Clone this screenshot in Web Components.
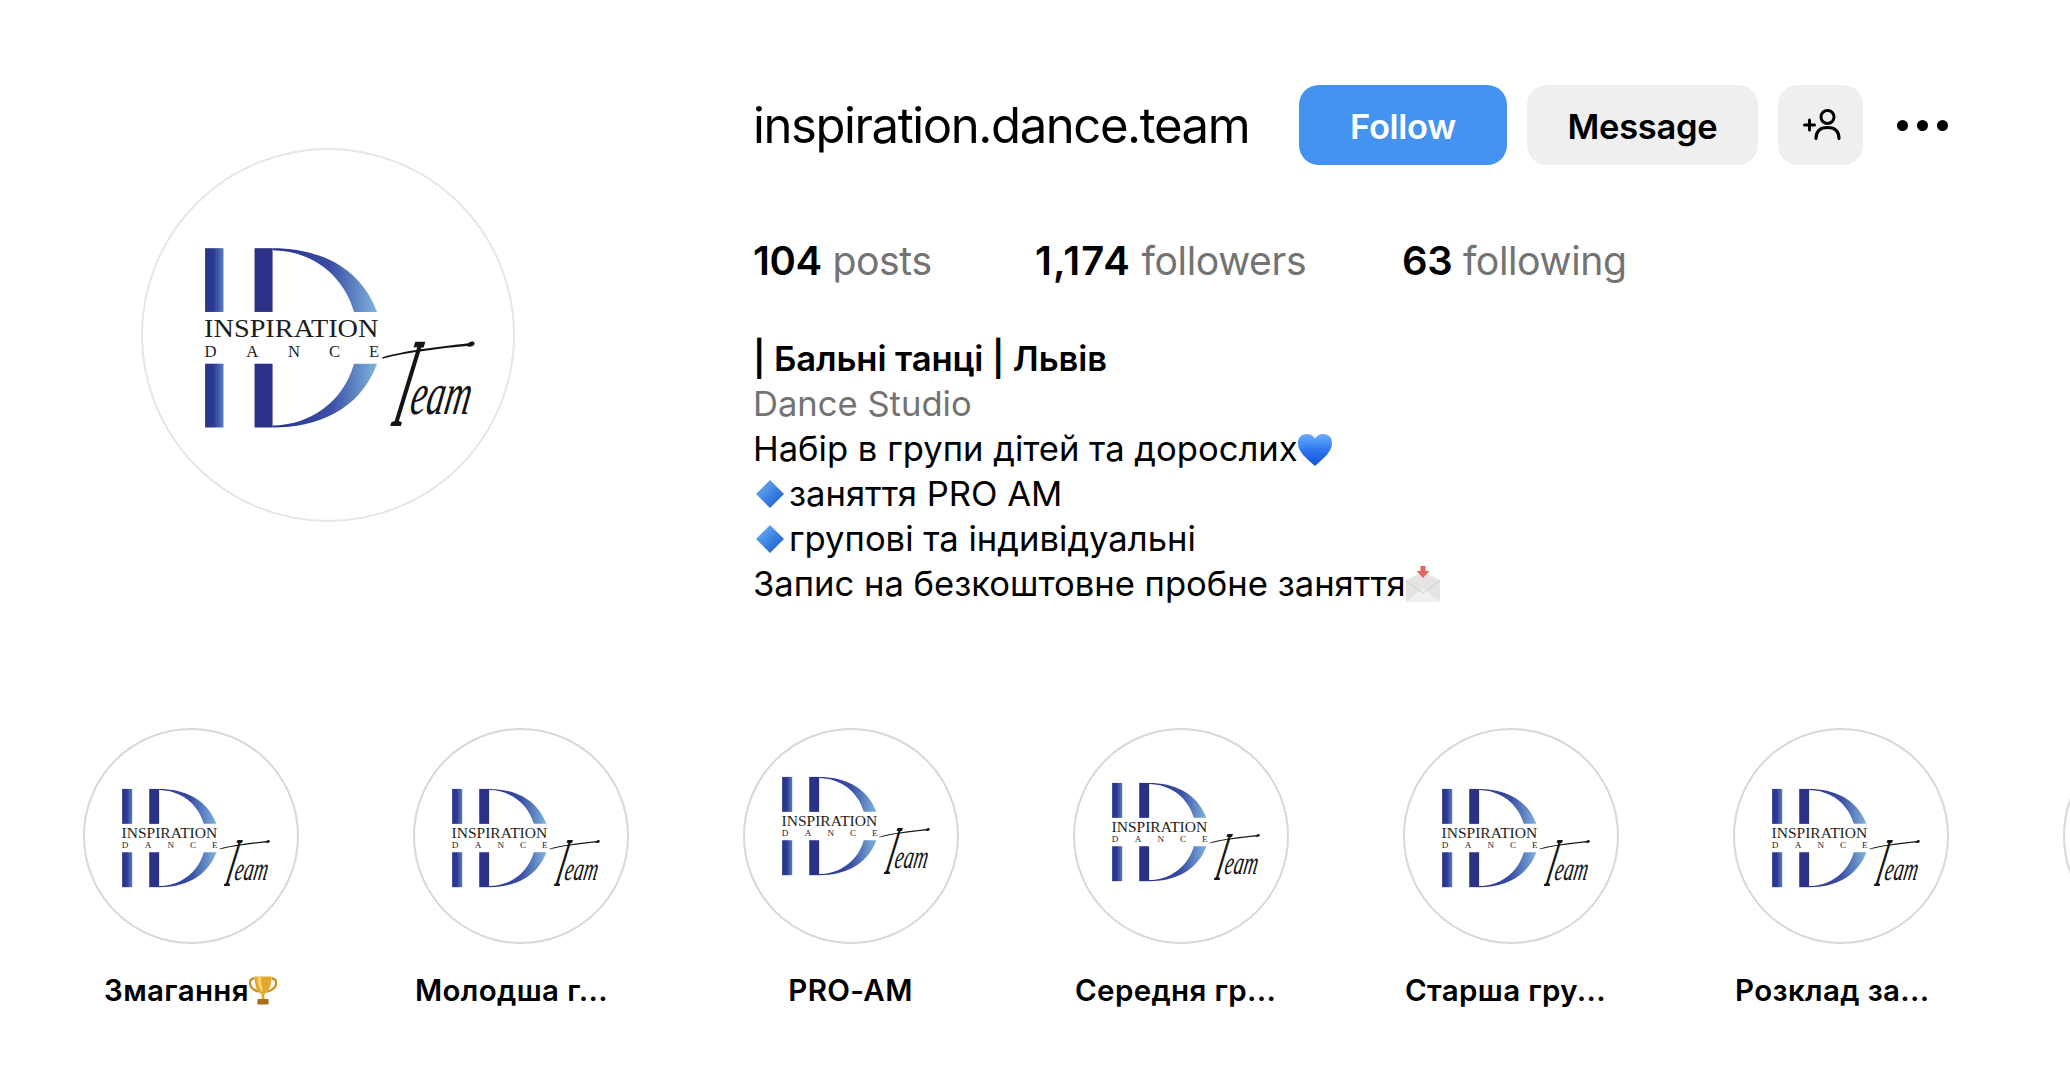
<!DOCTYPE html>
<html lang="uk">
<head>
<meta charset="utf-8">
<title>inspiration.dance.team</title>
<style>
  html, body { margin: 0; padding: 0; background: #fff; overflow: hidden; }
  body { font-family: Inter, "Noto Sans", sans-serif; color: #000; }
</style>
</head>
<body>
<ig-profile></ig-profile>
<script>
// Logo - coordinates follow the avatar crop, circle is 1120 wide
class IdLogo extends HTMLElement {
  connectedCallback() {
    const shadow = this.attachShadow({ mode: 'open' });
    const uid = 'g' + Math.random().toString(36).slice(2, 8);
    shadow.innerHTML = `
      <style>
        :host { display: block; width: 100%; height: 100%; }
        svg { display: block; width: 100%; height: 100%; overflow: visible; }
        .word { font-family: "Liberation Serif", serif; font-size: 76px; fill: #1d1d20; }
        .dance { font-family: "Liberation Serif", serif; font-size: 50px; fill: #232326; }
        .script { font-family: "Liberation Serif", serif; fill: #141414; }
      </style>
      <svg viewBox="65 55 1120 1120" aria-label="ID Inspiration Dance Team">
        <defs>
          <linearGradient id="${uid}i" x1="0" x2="1" y1="0" y2="0">
            <stop offset="0" stop-color="#2a3289"/><stop offset=".45" stop-color="#2b3a91"/><stop offset="1" stop-color="#5a7dc2"/>
          </linearGradient>
          <linearGradient id="${uid}d" gradientUnits="userSpaceOnUse" x1="459" x2="772" y1="0" y2="0">
            <stop offset="0" stop-color="#28308a"/><stop offset=".55" stop-color="#3a4ea4"/><stop offset="1" stop-color="#80b4dd"/>
          </linearGradient>
          <!-- keeps only the stem of the T, the flourish below is its bar -->
          <clipPath id="${uid}t"><path d="M888 630H918L842 892H810Z"/></clipPath>
        </defs>
        <rect x="257" y="355" width="55" height="191" fill="url(#${uid}i)"/>
        <rect x="257" y="701" width="55" height="191" fill="url(#${uid}i)"/>
        <rect x="405" y="355" width="54" height="191" fill="#2a3187"/>
        <rect x="405" y="701" width="54" height="191" fill="#2a3187"/>
        <path d="M459 355C590 355 720 405 772 546H703C670 430 570 362 459 361Z" fill="url(#${uid}d)"/>
        <path d="M459 892C590 892 720 842 772 701H703C670 817 570 885 459 886Z" fill="url(#${uid}d)"/>
        <text class="word" x="254" y="622" textLength="522" lengthAdjust="spacingAndGlyphs">INSPIRATION</text>
        <text class="dance" x="255 380 505 628 748" y="680">DANCE</text>
        <path d="M785 683C850 662 960 650 1045 640C1052 634 1062 632 1064 640C1064 650 1050 652 1040 648C960 655 860 668 790 685Z" fill="#141414"/>
        <g clip-path="url(#${uid}t)">
          <g transform="translate(785 888) skewX(-17) scale(.35 1)">
            <text class="script" x="0" y="0" font-size="385">T</text>
          </g>
        </g>
        <g transform="translate(866 852) skewX(-10) scale(.6 1)">
          <text class="script" x="0" y="0" font-size="180" font-style="italic">eam</text>
        </g>
      </svg>
    `;
  }
}

// Small colour emoji, no emoji font on the box
class IgEmoji extends HTMLElement {
  connectedCallback() {
    const shadow = this.attachShadow({ mode: 'open' });
    const art = {
      heart: `<svg viewBox="0 0 34 34"><defs><linearGradient id="h" x1="0" x2="0" y1="0" y2="1"><stop offset="0" stop-color="#6aaefb"/><stop offset=".5" stop-color="#2f78ef"/><stop offset="1" stop-color="#1050da"/></linearGradient></defs><path d="M17 33C8 25 0 19 0 10 0 4 4 1 9 1c3.500 0 6.500 1.800 8 4.800C18.500 2.800 21.500 1 25 1c5 0 9 3 9 9 0 9-8 15-17 23Z" fill="url(#h)"/></svg>`,
      diamond: `<svg viewBox="0 0 28 28"><defs><linearGradient id="d" x1="0" x2="1" y1="0" y2="1"><stop offset="0" stop-color="#7db4f1"/><stop offset=".5" stop-color="#3f86e4"/><stop offset="1" stop-color="#1a4fbc"/></linearGradient></defs><path d="M14 0 28 14 14 28 0 14Z" fill="url(#d)"/></svg>`,
      mail: `<svg viewBox="0 0 34 36"><path d="M0 14 17 6 34 14V36H0Z" fill="#e6e4e2"/><path d="M0 36 17 22 34 36Z" fill="#f1f0ee"/><path d="M0 15 17 27 34 15" fill="none" stroke="#d2d0cd" stroke-width="1"/><path d="M14.500 0h5v5h4l-6.500 7-6.500-7h4Z" fill="#e4665e"/></svg>`,
      trophy: `<svg viewBox="0 0 30 32"><path d="M6 3C0 3 0 10 3 13s6 4 8 4" fill="none" stroke="#c98f1f" stroke-width="2.500"/><path d="M24 3c6 0 6 7 3 10s-6 4-8 4" fill="none" stroke="#c98f1f" stroke-width="2.500"/><path d="M6 1H24C24 12 21 18 16.500 20V25H13.500V20C9 18 6 12 6 1Z" fill="#e3a92f"/><path d="M9 1h4c0 8 1 13 2 17-4-3-6-9-6-17Z" fill="#f6d36b"/><rect x="9" y="25" width="12" height="6" rx="1" fill="#a9701c"/></svg>`
    };
    shadow.innerHTML = `
      <style>
        :host { display: inline-block; width: var(--w, 34px); height: var(--h, 34px); vertical-align: var(--va, -6px); margin: var(--m, 0); }
        svg { display: block; width: 100%; height: 100%; }
      </style>
      ${art[this.getAttribute('name')] || ''}
    `;
  }
}

class IgButton extends HTMLElement {
  connectedCallback() {
    const shadow = this.attachShadow({ mode: 'open' });
    shadow.innerHTML = `
      <style>
        :host {
          display: flex; align-items: center; justify-content: center;
          height: 80px; border-radius: 20px; box-sizing: border-box; padding-top: 2px;
          background: var(--bg, #efefef); color: var(--fg, #000);
          font-weight: 600; font-size: 34.500px; letter-spacing: -0.3px;
        }
      </style>
      <slot></slot>
    `;
  }
}

class IgStat extends HTMLElement {
  connectedCallback() {
    const shadow = this.attachShadow({ mode: 'open' });
    shadow.innerHTML = `
      <style>
        :host { display: block; font-size: 39.200px; line-height: 50px; color: #737373; white-space: nowrap; letter-spacing: -0.4px; }
        b { color: #000; font-weight: 600; font-size: 40px; letter-spacing: var(--num, -0.4px); }
      </style>
      <b>${this.getAttribute('value')}</b> <slot></slot>
    `;
  }
}

class IgHighlight extends HTMLElement {
  connectedCallback() {
    const shadow = this.attachShadow({ mode: 'open' });
    const label = this.getAttribute('label') || '';
    const shift = this.getAttribute('shift') || '0';
    const cut = this.hasAttribute('cut');
    shadow.innerHTML = `
      <style>
        :host { display: flex; flex-direction: column; flex: none; width: 215px; align-items: center; }
        .ring {
          width: 216px; height: 216px; box-sizing: border-box; flex: none;
          border: 2.500px solid #d8d8d8; border-radius: 50%; background: #fff;
          display: flex; align-items: center; justify-content: center; overflow: hidden;
        }
        .art { width: 205px; height: 205px; flex: none; transform: translate(-1px, ${shift}px); }
        .label {
          margin-top: 26px; height: 40px; line-height: 40px; align-self: ${cut ? 'flex-start' : 'center'};
          ${cut ? 'margin-left: 2px;' : ''}
          font-size: 29.500px; font-weight: 600; white-space: nowrap; letter-spacing: 0.35px;
        }
      </style>
      <div class="ring">${label ? '<div class="art"><id-logo></id-logo></div>' : ''}</div>
      ${label ? `<div class="label">${label}<slot></slot></div>` : ''}
    `;
  }
}

class IgProfile extends HTMLElement {
  connectedCallback() {
    const shadow = this.attachShadow({ mode: 'open' });
    const stories = [
      { label: 'Змагання', emoji: true },
      { label: 'Молодша г...', cut: true },
      { label: 'PRO-AM', shift: -12 },
      { label: 'Середня гр...', cut: true, shift: -6 },
      { label: 'Старша гру...', cut: true },
      { label: 'Розклад за...', cut: true },
      { label: '' }
    ];
    const storyHTML = stories.map(s => `
      <ig-highlight ${s.label ? `label="${s.label}"` : ''} ${s.cut ? 'cut' : ''} shift="${s.shift || 0}">${s.emoji ? '<ig-emoji name="trophy" style="--w:28px;--h:31px;--va:-5px"></ig-emoji>' : ''}</ig-highlight>
    `).join('');

    shadow.innerHTML = `
      <style>
        :host { display: block; width: 2070px; height: 1092px; overflow: hidden; background: #fff; }
        header { display: flex; align-items: flex-start; padding-top: 85px; height: 643px; box-sizing: border-box; }
        .avatar-col { width: 754px; flex: none; padding: 63px 0 0 141px; box-sizing: border-box; }
        .avatar { width: 374px; height: 374px; box-sizing: border-box; border: 2px solid #e6e6e6; border-radius: 50%; }
        .avatar id-logo { width: 374px; height: 374px; margin: -2px; }
        .top { display: flex; align-items: center; height: 80px; }
        h1 { margin: 2px 0 0 -1px; font-size: 49px; font-weight: 400; letter-spacing: -1.4px; width: 546px; white-space: nowrap; line-height: 60px; }
        .follow { width: 208px; --bg: #4493f1; --fg: #fff; }
        .message { width: 231px; margin-left: 20px; }
        .add { width: 85px; margin-left: 20px; padding-top: 0; }
        .add svg { display: block; width: 40px; height: 40px; }
        .more { display: flex; gap: 9px; margin-left: 34px; }
        .more i { width: 11px; height: 11px; border-radius: 50%; background: #000; }
        .stats { display: flex; height: 50px; margin-top: 71px; margin-left: -1px; }
        .stats ig-stat:nth-child(1) { width: 282px; }
        .stats ig-stat:nth-child(2) { width: 367px; --num: 1.100px; }
        .bio { margin: 50px 0 0 -1px; font-size: 34.600px; line-height: 45px; white-space: nowrap; }
        .bio b { font-weight: 600; display: block; letter-spacing: -0.1px; }
        .bio span { display: block; }
        .bio .cat { color: #737373; }
        nav { display: flex; gap: 115px; padding: 85px 0 0 83px; width: 2400px; box-sizing: border-box; }
      </style>
      <header>
        <div class="avatar-col"><div class="avatar"><id-logo></id-logo></div></div>
        <div>
          <div class="top">
            <h1>inspiration.dance.team</h1>
            <ig-button class="follow">Follow</ig-button>
            <ig-button class="message">Message</ig-button>
            <ig-button class="add">
              <svg viewBox="0 0 40 40" fill="none" stroke="#000" stroke-width="3" stroke-linecap="round">
                <circle cx="26.500" cy="12" r="6.500"/>
                <path d="M15 33.500C15 26 19.500 22.500 26.500 22.500S38 26 38 33.500"/>
                <path d="M3.500 20H13.500M8.500 15V25"/>
              </svg>
            </ig-button>
            <div class="more"><i></i><i></i><i></i></div>
          </div>
          <div class="stats">
            <ig-stat value="104">posts</ig-stat>
            <ig-stat value="1,174">followers</ig-stat>
            <ig-stat value="63">following</ig-stat>
          </div>
          <div class="bio">
            <b>| Бальні танці | Львів</b>
            <span class="cat">Dance Studio</span>
            <span>Набір в групи дітей та дорослих<ig-emoji name="heart"></ig-emoji></span>
            <span><ig-emoji name="diamond" style="--w:28px;--h:28px;--va:-2px;--m:0 5px 0 3px"></ig-emoji>заняття PRO AM</span>
            <span><ig-emoji name="diamond" style="--w:28px;--h:28px;--va:-2px;--m:0 5px 0 3px"></ig-emoji>групові та індивідуальні</span>
            <span>Запис на безкоштовне пробне заняття<ig-emoji name="mail" style="--h:36px;--va:-6px"></ig-emoji></span>
          </div>
        </div>
      </header>
      <nav>${storyHTML}</nav>
    `;
  }
}

customElements.define('id-logo', IdLogo);
customElements.define('ig-emoji', IgEmoji);
customElements.define('ig-button', IgButton);
customElements.define('ig-stat', IgStat);
customElements.define('ig-highlight', IgHighlight);
customElements.define('ig-profile', IgProfile);
</script>
</body>
</html>
